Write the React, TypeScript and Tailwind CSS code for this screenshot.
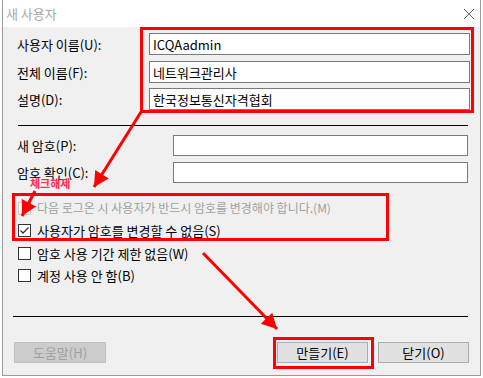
import clsx from 'clsx';

const FONT = "font-['Noto_Sans_CJK_KR','Malgun_Gothic',sans-serif]";

type Pt = [number, number];

// arrowhead polygon for a line from a to b (tip at b)
function head(a: Pt, b: Pt, len = 15, half = 8) {
	const dx = b[0] - a[0];
	const dy = b[1] - a[1];
	const d = Math.hypot(dx, dy);
	const ux = dx / d;
	const uy = dy / d;
	const bx = b[0] - ux * len;
	const by = b[1] - uy * len;
	const p1 = `${bx - uy * half},${by + ux * half}`;
	const p2 = `${bx + uy * half},${by - ux * half}`;
	return `${b[0]},${b[1]} ${p1} ${p2}`;
}

const ARROWS: [Pt, Pt][] = [
	[[141, 112], [94, 187]],
	[[35, 191], [22, 216]],
	[[203, 253], [277, 329]],
];

function Field({ label, value, labelW, inputW, h }: { label: string; value?: string; labelW: string; inputW: string; h: string }) {
	return (
		<div className={clsx('flex items-center', h)}>
			<div className={clsx(labelW, 'text-[13px] leading-none text-black')}>{label}</div>
			<div className={clsx(inputW, h, 'flex items-center border border-[#7a7a7a] bg-white pl-[3px] text-[13px] leading-none text-black')}>
				{value}
			</div>
		</div>
	);
}

function Check({ label, checked, disabled }: { label: string; checked?: boolean; disabled?: boolean }) {
	return (
		<div className="flex h-[16px] items-center ml-[1px]">
			<span
				className={clsx(
					'flex h-[13px] w-[13px] items-center justify-center border',
					disabled ? 'border-[#cccccc] bg-[#f7f7f7]' : 'border-[#333333] bg-white',
				)}
			>
				{checked && (
					<svg width="11" height="11" viewBox="0 0 11 11">
						<path d="M1.5 5.5 L4 8 L9.5 2.5" fill="none" stroke="#333" strokeWidth="1.3" />
					</svg>
				)}
			</span>
			<span
				className={clsx(
					'ml-[6px] leading-none',
					disabled ? 'text-[12px] text-[#a0a0a0]' : 'text-[13px] text-black',
				)}
			>
				{label}
			</span>
		</div>
	);
}

export default function App() {
	return (
		<div className={clsx('relative h-[378px] w-[483px] overflow-hidden bg-white', FONT)}>
			<div className="ml-[2px] flex h-[376px] w-[479px] flex-col border-x border-b border-[#9a9a9a]">
				{/* title bar */}
				<div className="flex h-[27px] items-center justify-between bg-white pl-[3px] pr-[5px]">
					<span className="text-[13px] leading-none text-[#a7a7a7]">새 사용자</span>
					<svg width="12" height="12" viewBox="0 0 12 12">
						<path d="M1 1 L11 11 M11 1 L1 11" stroke="#6a6a6a" strokeWidth="1" />
					</svg>
				</div>

				<div className="flex flex-1 flex-col bg-[#f0f0f0] pl-[14px]">
					<div className="mt-[6px]">
						<Field label="사용자 이름(U):" value="ICQAadmin" labelW="w-[132px]" inputW="w-[321px]" h="h-[22px]" />
					</div>
					<div className="mt-[6px]">
						<Field label="전체 이름(F):" value="네트워크관리사" labelW="w-[132px]" inputW="w-[321px]" h="h-[22px]" />
					</div>
					<div className="mt-[5px]">
						<Field label="설명(D):" value="한국정보통신자격협회" labelW="w-[132px]" inputW="w-[321px]" h="h-[22px]" />
					</div>

					<div className="ml-[1px] mt-[15px] h-px w-[450px] bg-black" />

					<div className="mt-[9px]">
						<Field label="새 암호(P):" labelW="w-[156px]" inputW="w-[295px]" h="h-[21px]" />
					</div>
					<div className="mt-[6px]">
						<Field label="암호 확인(C):" labelW="w-[156px]" inputW="w-[295px]" h="h-[21px]" />
					</div>

					<div className="mt-[17px]">
						<Check label="다음 로그온 시 사용자가 반드시 암호를 변경해야 합니다.(M)" disabled />
					</div>
					<div className="mt-[6px]">
						<Check label="사용자가 암호를 변경할 수 없음(S)" checked />
					</div>
					<div className="mt-[7px]">
						<Check label="암호 사용 기간 제한 없음(W)" />
					</div>
					<div className="mt-[6px]">
						<Check label="계정 사용 안 함(B)" />
					</div>

					<div className="-ml-[4px] mt-[33px] h-px w-[455px] bg-black" />

					<div className="mt-[25px] flex">
						<button className="-ml-[3px] flex h-[21px] w-[92px] items-center justify-center border border-[#bfbfbf] bg-[#cccccc] text-[13px] leading-none text-[#a0a0a0]">
							도움말(H)
						</button>
						<button className="ml-[171px] flex h-[21px] w-[91px] items-center justify-center border border-[#adadad] bg-[#e1e1e1] text-[13px] leading-none text-black">
							만들기(E)
						</button>
						<button className="ml-[10px] flex h-[21px] w-[91px] items-center justify-center border border-[#adadad] bg-[#e1e1e1] text-[13px] leading-none text-black">
							닫기(O)
						</button>
					</div>
				</div>
			</div>

			{/* annotations */}
			<div className="absolute left-[140px] top-[27px] h-[86px] w-[334px] border-[3px] border-[#ff0000]" />
			<div className="absolute left-[12px] top-[193px] h-[48px] w-[377px] border-[3px] border-[#ff0000]" />
			<div className="absolute left-[273px] top-[337px] h-[32px] w-[101px] border-[3px] border-[#ff0000]" />
			<span className="absolute left-[30px] top-[178px] text-[11px] font-bold leading-none text-[#ff2a55]">
				체크해제
			</span>
			<svg className="absolute left-0 top-0" width="483" height="378">
				{ARROWS.map(([a, b], i) => (
					<g key={i}>
						<line x1={a[0]} y1={a[1]} x2={b[0]} y2={b[1]} stroke="#ff0000" strokeWidth="3" />
						<polygon points={head(a, b)} fill="#ff0000" />
					</g>
				))}
			</svg>
		</div>
	);
}
